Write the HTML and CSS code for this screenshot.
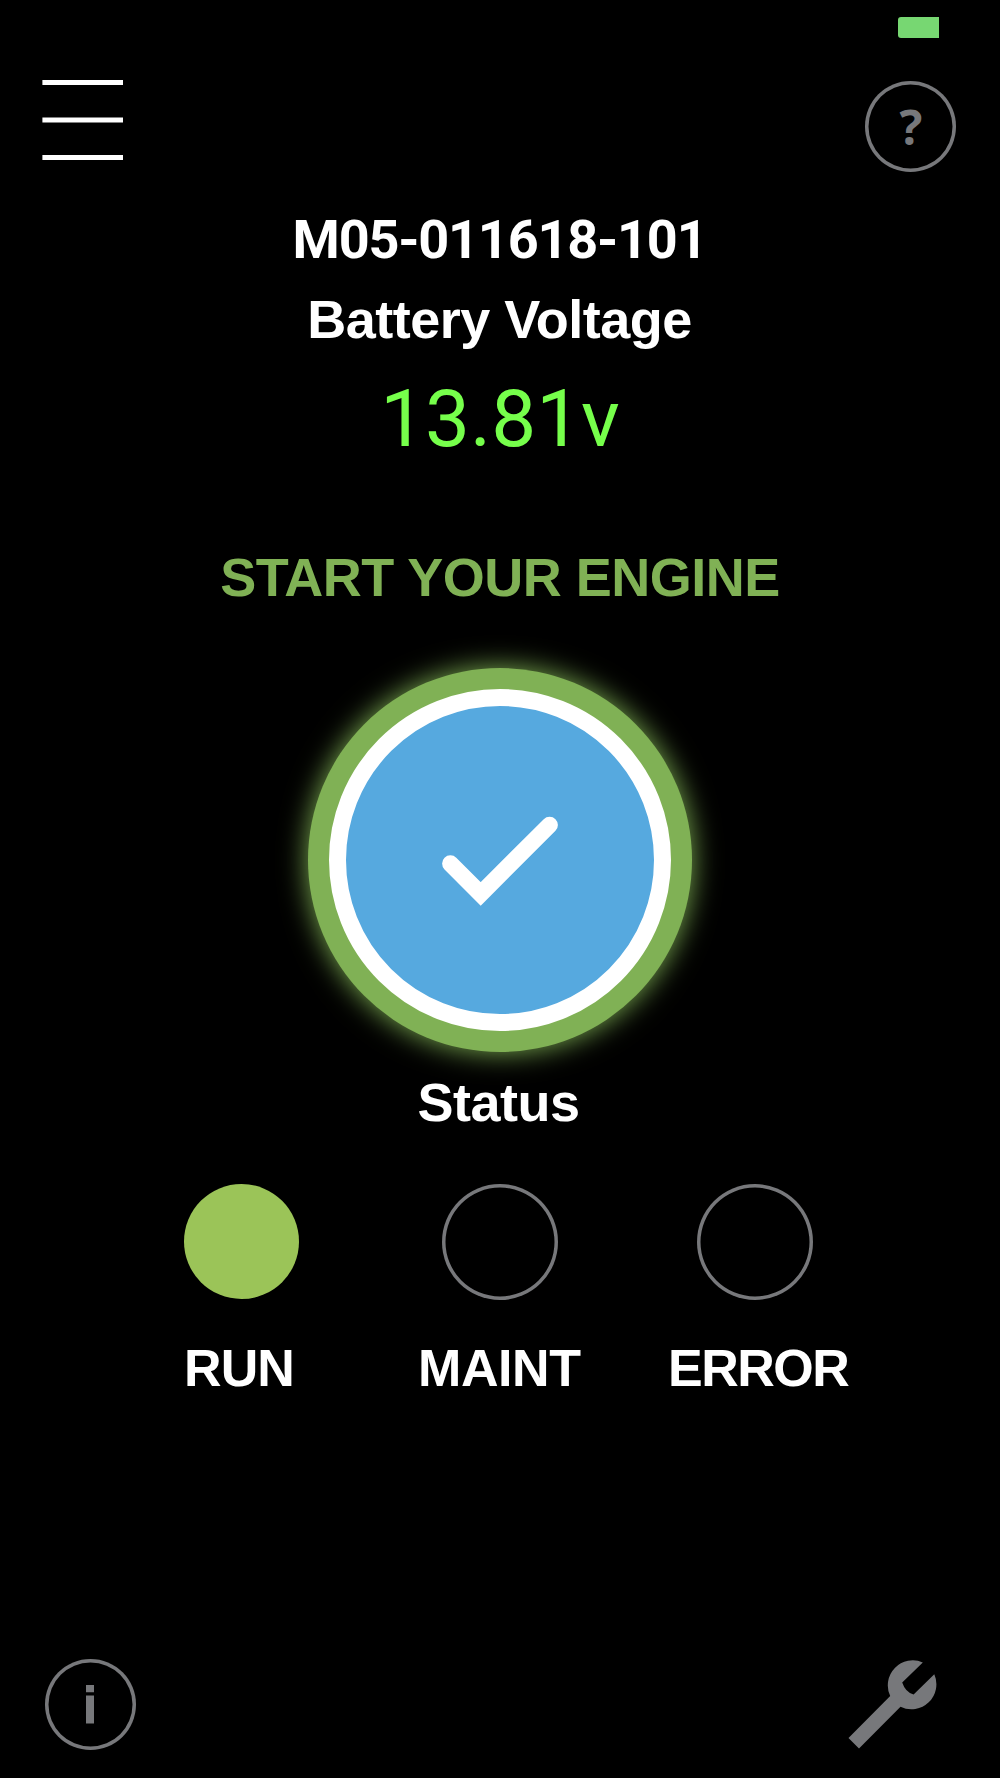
FILE: index.html
```html
<!DOCTYPE html>
<html lang="en">
<head>
    <meta charset="UTF-8">
    <meta name="viewport" content="width=device-width, initial-scale=1.0">
    <title>Battery Monitor</title>
    <link rel="stylesheet" href="styles.css">
</head>
<body>
    <div class="screen">
        <div class="status-bar">
            <div class="battery"></div>
        </div>

        <header class="top-bar">
            <button class="icon-button" aria-label="Menu">
                <svg class="menu-icon" width="81" height="82" viewBox="0 0 81 82">
                    <path d="M0.4 3.4H81M0.4 41H81M0.4 78.5H81" stroke="#fff" stroke-width="5"/>
                </svg>
            </button>
            <button class="icon-button round help" aria-label="Help">?</button>
        </header>

        <main>
            <h1 class="device">M05-011618-101</h1>
            <h2 class="caption">Battery Voltage</h2>
            <p class="voltage">13.81v</p>
            <p class="message">START YOUR ENGINE</p>

            <!-- Start button -->
            <button class="start-button" aria-label="Start">
                <svg width="308" height="308" viewBox="0 0 308 308">
                    <path d="M104.4 157.6L134.7 187.9L203.6 119" fill="none" stroke="#fff" stroke-width="16.6" stroke-linecap="round"/>
                </svg>
            </button>

            <h2 class="status-title">Status</h2>
            <div class="lights">
                <span class="light on"></span>
                <span class="light"></span>
                <span class="light"></span>
            </div>
            <div class="labels">
                <span class="run">RUN</span>
                <span class="maint">MAINT</span>
                <span class="error">ERROR</span>
            </div>
        </main>

        <footer class="bottom-bar">
            <button class="icon-button round" aria-label="Info">
                <svg width="8" height="39" viewBox="0 0 8 39">
                    <path d="M0 0H8V7.3H0zM0 10.5H8V38.5H0z" fill="#77787b"/>
                </svg>
            </button>
            <button class="icon-button wrench" aria-label="Settings">
                <svg width="90" height="90" viewBox="0 0 90 90">
                    <path d="M0.5 79L42.2 37A25 25 0 0 1 74.8 3.4L54.2 23.6Q57.5 33.5 65.6 35.6L86.3 15.3A25 25 0 0 1 52.5 47.8L11 89.5z" fill="#77787b"/>
                </svg>
            </button>
        </footer>
    </div>
</body>
</html>
```
FILE: styles.css
```css
* {
    box-sizing: border-box;
}

body {
    margin: 0;
    background-color: #000;
    color: #fff;
    font-family: "Liberation Sans", Arial, sans-serif;
}

h1, h2, p {
    margin: 0;
}

.screen {
    width: 1000px;
    height: 1778px;
    display: flex;
    flex-direction: column;
    overflow: hidden;
}

.status-bar {
    display: flex;
    justify-content: flex-end;
    height: 79px;
    padding: 17px 61px 0 0;
}

.battery {
    width: 41px;
    height: 21px;
    border-radius: 3px 0 0 3px;
    background-color: #77d772;
}

.top-bar {
    display: flex;
    justify-content: space-between;
    align-items: flex-start;
    height: 121px;
    padding: 0 44px 0 42px;
}

.icon-button {
    display: flex;
    align-items: center;
    justify-content: center;
    padding: 0;
    border: none;
    background: none;
    color: #77787b;
    cursor: pointer;
}

.round {
    width: 91px;
    height: 91px;
    border-radius: 50%;
    box-shadow: inset 0 0 0 3.5px #77787b;
}

.help {
    margin-top: 2px;
    padding-left: 1px;
    font-family: "Open Sans", sans-serif;
    font-size: 48px;
    font-weight: bold;
}

main {
    flex: 1;
    display: flex;
    flex-direction: column;
    align-items: center;
}

.device,
.caption,
.message,
.status-title {
    height: 79px;
    font-size: 54px;
    font-weight: bold;
    line-height: 80px;
    letter-spacing: -0.5px;
    white-space: nowrap;
}

.device {
    padding-right: 1px;
    font-family: Roboto, sans-serif;
    letter-spacing: -1.2px;
}

.caption {
    padding-right: 1px;
}

.voltage {
    height: 100px;
    margin: 11px 0 68px;
    font-family: Roboto, sans-serif;
    font-size: 80px;
    line-height: 100px;
    color: #76ff4b;
}

.message {
    color: #80b155;
}

.start-button {
    width: 384px;
    height: 384px;
    margin: 51.5px 0 10.5px;
    padding: 21px;
    border: none;
    border-radius: 50%;
    background-color: #80b155;
    box-shadow: 0 0 28px #80b155;
    cursor: pointer;
}

.start-button svg {
    display: block;
    width: 342px;
    height: 342px;
    border: 17px solid #fff;
    border-radius: 50%;
    background-color: #56a9df;
}

.status-title {
    padding-right: 3px;
}

.lights {
    display: flex;
    gap: 139px;
    margin: 43px 3px 33px 0;
}

.light {
    width: 116px;
    height: 116px;
    border-radius: 50%;
    box-shadow: inset 0 0 0 3.5px #77787b;
}

.light.on {
    width: 115px;
    height: 115px;
    margin-right: 4px;
    background-color: #9bc458;
    box-shadow: none;
}

.labels {
    display: flex;
    align-self: stretch;
    padding-left: 184px;
    font-size: 52px;
    font-weight: bold;
    line-height: 70px;
}

.run {
    width: 234px;
    letter-spacing: -0.9px;
}

.maint {
    width: 250px;
    letter-spacing: -0.4px;
}

.error {
    letter-spacing: -1.5px;
}

.bottom-bar {
    display: flex;
    justify-content: space-between;
    align-items: flex-start;
    height: 119px;
    padding: 0 62px 0 44.5px;
}
```
